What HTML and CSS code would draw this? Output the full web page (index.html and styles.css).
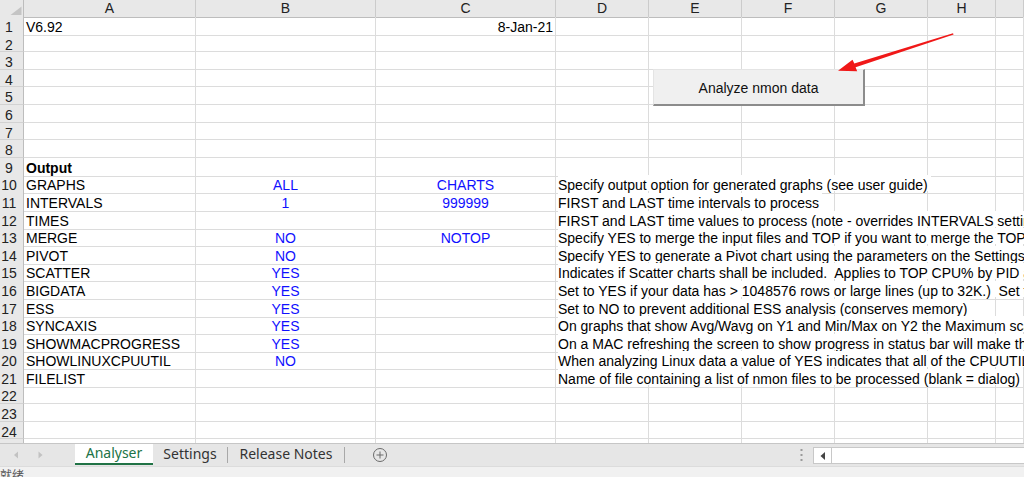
FILE: index.html
```html
<!DOCTYPE html>
<html>
<head>
<meta charset="utf-8">
<link rel="stylesheet" href="styles.css">
</head>
<body>
<div class="sheet">
  <div class="row head">
    <div class="corner"><svg width="24" height="17" viewBox="0 0 24 17"><polygon points="21.5,6.5 21.5,15 10.5,15" fill="#c4c4c4"/></svg></div>
    <div class="ch">A</div><div class="ch">B</div><div class="ch">C</div><div class="ch">D</div><div class="ch">E</div><div class="ch">F</div><div class="ch">G</div><div class="ch">H</div><div class="ch"></div>
  </div>
  <div class="row"><div class="rh">1</div><div class="c">V6.92</div><div class="c"></div><div class="c r">8-Jan-21</div><div class="c"></div><div class="c"></div><div class="c"></div><div class="c"></div><div class="c"></div><div class="c"></div></div>
  <div class="row"><div class="rh">2</div><div class="c"></div><div class="c"></div><div class="c"></div><div class="c"></div><div class="c"></div><div class="c"></div><div class="c"></div><div class="c"></div><div class="c"></div></div>
  <div class="row"><div class="rh">3</div><div class="c"></div><div class="c"></div><div class="c"></div><div class="c"></div><div class="c"></div><div class="c"></div><div class="c"></div><div class="c"></div><div class="c"></div></div>
  <div class="row"><div class="rh">4</div><div class="c"></div><div class="c"></div><div class="c"></div><div class="c"></div><div class="c"></div><div class="c"></div><div class="c"></div><div class="c"></div><div class="c"></div></div>
  <div class="row"><div class="rh">5</div><div class="c"></div><div class="c"></div><div class="c"></div><div class="c"></div><div class="c"></div><div class="c"></div><div class="c"></div><div class="c"></div><div class="c"></div></div>
  <div class="row"><div class="rh">6</div><div class="c"></div><div class="c"></div><div class="c"></div><div class="c"></div><div class="c"></div><div class="c"></div><div class="c"></div><div class="c"></div><div class="c"></div></div>
  <div class="row"><div class="rh">7</div><div class="c"></div><div class="c"></div><div class="c"></div><div class="c"></div><div class="c"></div><div class="c"></div><div class="c"></div><div class="c"></div><div class="c"></div></div>
  <div class="row"><div class="rh">8</div><div class="c"></div><div class="c"></div><div class="c"></div><div class="c"></div><div class="c"></div><div class="c"></div><div class="c"></div><div class="c"></div><div class="c"></div></div>
  <div class="row"><div class="rh">9</div><div class="c bold">Output</div><div class="c"></div><div class="c"></div><div class="c"></div><div class="c"></div><div class="c"></div><div class="c"></div><div class="c"></div><div class="c"></div></div>
  <div class="row"><div class="rh">10</div><div class="c">GRAPHS</div><div class="c b">ALL</div><div class="c b">CHARTS</div><div class="c"><span class="ov">Specify output option for generated graphs (see user guide)</span></div><div class="c"></div><div class="c"></div><div class="c"></div><div class="c"></div><div class="c"></div></div>
  <div class="row"><div class="rh">11</div><div class="c">INTERVALS</div><div class="c b">1</div><div class="c b">999999</div><div class="c"><span class="ov">FIRST and LAST time intervals to process</span></div><div class="c"></div><div class="c"></div><div class="c"></div><div class="c"></div><div class="c"></div></div>
  <div class="row"><div class="rh">12</div><div class="c">TIMES</div><div class="c b"></div><div class="c b"></div><div class="c"><span class="ov">FIRST and LAST time values to process (note - overrides INTERVALS setting)</span></div><div class="c"></div><div class="c"></div><div class="c"></div><div class="c"></div><div class="c"></div></div>
  <div class="row"><div class="rh">13</div><div class="c">MERGE</div><div class="c b">NO</div><div class="c b">NOTOP</div><div class="c"><span class="ov">Specify YES to merge the input files and TOP if you want to merge the TOP sections</span></div><div class="c"></div><div class="c"></div><div class="c"></div><div class="c"></div><div class="c"></div></div>
  <div class="row"><div class="rh">14</div><div class="c">PIVOT</div><div class="c b">NO</div><div class="c b"></div><div class="c"><span class="ov">Specify YES to generate a Pivot chart using the parameters on the Settings sheet</span></div><div class="c"></div><div class="c"></div><div class="c"></div><div class="c"></div><div class="c"></div></div>
  <div class="row"><div class="rh">15</div><div class="c">SCATTER</div><div class="c b">YES</div><div class="c b"></div><div class="c"><span class="ov">Indicates if Scatter charts shall be included.  Applies to TOP CPU% by PID and TOP memory</span></div><div class="c"></div><div class="c"></div><div class="c"></div><div class="c"></div><div class="c"></div></div>
  <div class="row"><div class="rh">16</div><div class="c">BIGDATA</div><div class="c b">YES</div><div class="c b"></div><div class="c"><span class="ov">Set to YES if your data has &gt; 1048576 rows or large lines (up to 32K.)  Set to NO otherwise</span></div><div class="c"></div><div class="c"></div><div class="c"></div><div class="c"></div><div class="c"></div></div>
  <div class="row"><div class="rh">17</div><div class="c">ESS</div><div class="c b">YES</div><div class="c b"></div><div class="c"><span class="ov">Set to NO to prevent additional ESS analysis (conserves memory)</span></div><div class="c"></div><div class="c"></div><div class="c"></div><div class="c"></div><div class="c"></div></div>
  <div class="row"><div class="rh">18</div><div class="c">SYNCAXIS</div><div class="c b">YES</div><div class="c b"></div><div class="c"><span class="ov">On graphs that show Avg/Wavg on Y1 and Min/Max on Y2 the Maximum scale will be synchronised</span></div><div class="c"></div><div class="c"></div><div class="c"></div><div class="c"></div><div class="c"></div></div>
  <div class="row"><div class="rh">19</div><div class="c">SHOWMACPROGRESS</div><div class="c b">YES</div><div class="c b"></div><div class="c"><span class="ov">On a MAC refreshing the screen to show progress in status bar will make the analysis slower</span></div><div class="c"></div><div class="c"></div><div class="c"></div><div class="c"></div><div class="c"></div></div>
  <div class="row"><div class="rh">20</div><div class="c">SHOWLINUXCPUUTIL</div><div class="c b">NO</div><div class="c b"></div><div class="c"><span class="ov">When analyzing Linux data a value of YES indicates that all of the CPUUTIL sheets are shown</span></div><div class="c"></div><div class="c"></div><div class="c"></div><div class="c"></div><div class="c"></div></div>
  <div class="row"><div class="rh">21</div><div class="c">FILELIST</div><div class="c b"></div><div class="c b"></div><div class="c"><span class="ov">Name of file containing a list of nmon files to be processed (blank = dialog)</span></div><div class="c"></div><div class="c"></div><div class="c"></div><div class="c"></div><div class="c"></div></div>
  <div class="row"><div class="rh">22</div><div class="c"></div><div class="c"></div><div class="c"></div><div class="c"></div><div class="c"></div><div class="c"></div><div class="c"></div><div class="c"></div><div class="c"></div></div>
  <div class="row"><div class="rh">23</div><div class="c"></div><div class="c"></div><div class="c"></div><div class="c"></div><div class="c"></div><div class="c"></div><div class="c"></div><div class="c"></div><div class="c"></div></div>
  <div class="row"><div class="rh">24</div><div class="c"></div><div class="c"></div><div class="c"></div><div class="c"></div><div class="c"></div><div class="c"></div><div class="c"></div><div class="c"></div><div class="c"></div></div>
  <div class="row"><div class="rh">25</div><div class="c"></div><div class="c"></div><div class="c"></div><div class="c"></div><div class="c"></div><div class="c"></div><div class="c"></div><div class="c"></div><div class="c"></div></div>

  <div class="button">Analyze nmon data</div>
</div>

<div class="tabbar">
  <div class="nav">
    <svg width="75" height="22" viewBox="0 0 75 22"><polygon points="18,7.5 18,14.5 14,11" fill="#c2c2c2"/><polygon points="38.5,7.5 38.5,14.5 42.5,11" fill="#c2c2c2"/></svg>
  </div>
  <div class="tab active">Analyser</div>
  <div class="tab settings">Settings</div>
  <div class="sep"></div>
  <div class="tab notes">Release Notes</div>
  <div class="sep"></div>
  <div class="add"><svg width="16" height="16" viewBox="0 0 16 16"><circle cx="8" cy="8" r="6.5" fill="none" stroke="#6a6a6a" stroke-width="1"/><path d="M8 4.5V11.5M4.5 8H11.5" stroke="#6a6a6a" stroke-width="1"/></svg></div>
  <div class="spacer"></div>
  <div class="dots"><svg width="3" height="14" viewBox="0 0 3 14"><rect x="0.5" y="1" width="2" height="2" fill="#9a9a9a"/><rect x="0.5" y="6" width="2" height="2" fill="#9a9a9a"/><rect x="0.5" y="11" width="2" height="2" fill="#9a9a9a"/></svg></div>
  <div class="hscroll">
    <div class="sbtn"><svg width="8" height="10" viewBox="0 0 8 10"><polygon points="6,1 6,9 1.5,5" fill="#444"/></svg></div>
    <div class="track"></div>
  </div>
</div>
<div class="status">就绪</div>

<svg class="arrow" width="1024" height="477" viewBox="0 0 1024 477">
  <polygon points="838,70.8 852.5,59.8 854.3,63.6 953,33.2 953.6,34.6 855.6,67.2 857.2,71.2" fill="#f01818"/>
</svg>
</body>
</html>
```

FILE: styles.css
```css
html, body {
  margin: 0;
  padding: 0;
}
body {
  width: 1024px;
  height: 477px;
  overflow: hidden;
  position: relative;
  background: #ffffff;
  font-family: "Liberation Sans", Arial, sans-serif;
  color: #000;
}

.sheet {
  height: 443px;
  overflow: hidden;
  position: relative;
}

.row {
  display: grid;
  grid-template-columns: 24px 172px 180px 180px 93px 93px 93px 93px 68px 1fr;
  height: 17.6px;
}
.row.head {
  height: 17px;
}

.corner {
  background: #e8e8e8;
  border-right: 1px solid #bdbdbd;
  border-bottom: 1px solid #bdbdbd;
  box-sizing: border-box;
  overflow: hidden;
}
.corner svg { display: block; }

.ch {
  background: #e8e8e8;
  border-right: 1px solid #cbcbcb;
  border-bottom: 1px solid #bdbdbd;
  box-sizing: border-box;
  text-align: center;
  font-size: 14px;
  line-height: 17px;
  color: #222;
}

.rh {
  background: #e8e8e8;
  border-right: 1px solid #bdbdbd;
  border-bottom: 1px solid #d2d2d2;
  box-sizing: border-box;
  text-align: center;
  padding-right: 5px;
  padding-top: 2px;
  font-size: 14px;
  line-height: 16px;
  color: #222;
  overflow: hidden;
}

.c {
  border-right: 1px solid #dcdcdc;
  border-bottom: 1px solid #dcdcdc;
  box-sizing: border-box;
  padding: 2px 2px 0 2px;
  font-size: 14px;
  line-height: 16px;
  white-space: nowrap;
  min-width: 0;
}
.c.r { text-align: right; }
.c.b { color: #1010ff; text-align: center; }
.c.bold { font-weight: bold; }

.ov {
  display: inline-block;
  position: relative;
  z-index: 1;
  background: #ffffff;
  white-space: pre;
  height: 14px;
  margin-top: -2px;
  padding-top: 2px;
  padding-right: 3px;
  line-height: 16px;
  vertical-align: top;
}

.button {
  position: absolute;
  left: 653px;
  top: 69px;
  width: 212px;
  height: 37px;
  box-sizing: border-box;
  background: #f0f0f0;
  border-top: 1px solid #e4e4e4;
  border-left: 1px solid #e4e4e4;
  border-right: 2px solid #8c8c8c;
  border-bottom: 2px solid #8c8c8c;
  font-size: 14px;
  line-height: 36px;
  text-align: center;
  color: #111;
  z-index: 2;
}

.tabbar {
  height: 23px;
  box-sizing: border-box;
  background: #e6e6e6;
  border-top: 1px solid #c6c6c6;
  display: flex;
  align-items: flex-start;
  font-family: "Noto Sans", "Open Sans", sans-serif;
}
.nav { width: 75px; height: 22px; }
.nav svg { display: block; }

.tab {
  height: 21px;
  box-sizing: border-box;
  display: flex;
  align-items: center;
  justify-content: center;
  font-size: 14px;
  color: #333;
  padding-bottom: 3px;
}
.tab.active {
  width: 78px;
  background: #ffffff;
  color: #217346;
  border-bottom: 2px solid #217346;
  padding-bottom: 2px;
}
.tab.settings { width: 74px; }
.tab.notes { width: 116px; }

.sep {
  width: 1px;
  height: 16px;
  margin-top: 3px;
  background: #a8a8a8;
}

.add {
  margin-left: 27px;
  margin-top: 3px;
  width: 16px;
  height: 16px;
}
.add svg { display: block; }

.spacer { flex: 1; }

.dots {
  margin-top: 4px;
  margin-right: 10px;
  width: 3px;
}
.dots svg { display: block; }

.hscroll {
  width: 211px;
  height: 17px;
  margin-top: 3px;
  display: flex;
  box-sizing: border-box;
  border: 1px solid #c8c8c8;
  border-right: none;
  background: #ffffff;
}
.sbtn {
  width: 17px;
  border-right: 1px solid #c8c8c8;
  display: flex;
  align-items: center;
  justify-content: center;
}
.sbtn svg { display: block; }
.track { flex: 1; }

.status {
  height: 11px;
  box-sizing: border-box;
  background: #f1f1f1;
  border-top: 1px solid #dcdcdc;
  overflow: hidden;
  padding-top: 2px;
  padding-left: 0;
  font-family: "Noto Sans CJK SC", sans-serif;
  font-size: 12px;
  line-height: 12px;
  color: #555;
}

.arrow {
  position: absolute;
  left: 0;
  top: 0;
  pointer-events: none;
  z-index: 5;
}
```
